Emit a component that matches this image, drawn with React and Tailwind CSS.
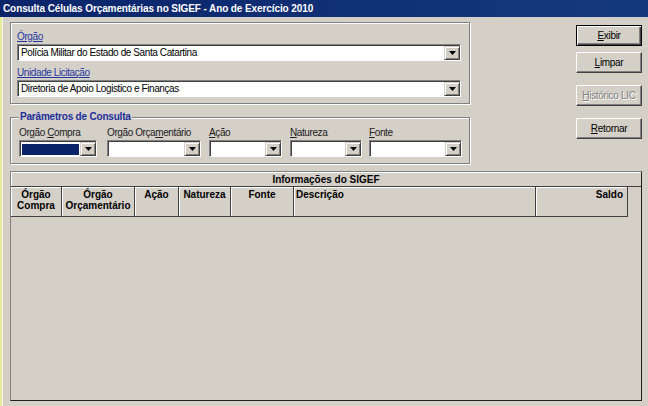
import React from 'react';

const Arrow = () => (
    <div className="w-[16px] h-full bg-[#d4d0c8] border border-t-[#d4d0c8] border-l-[#d4d0c8] border-r-[#404040] border-b-[#404040] shadow-[inset_1px_1px_0_#fff,inset_-1px_-1px_0_#808080] flex items-center justify-center">
        <svg width="7" height="4" viewBox="0 0 7 4">
            <path d="M0 0h7L3.5 4z" fill="#000" />
        </svg>
    </div>
);

const Combo = ({ value, width, selected }) => (
    <div
        className={`h-[17px] flex border border-t-[#808080] border-l-[#808080] border-r-white border-b-white shadow-[inset_1px_1px_0_#404040] bg-white pl-[1px] pt-[1px] ${width}`}
    >
        <div className="flex-1 min-w-0 flex items-center">
            {selected ? (
                <div className="h-[11px] w-full mx-[1px] bg-[#0a246a]" />
            ) : (
                <span className="pl-[2px] text-[10px] tracking-[-0.4px] text-black whitespace-nowrap leading-none">{value}</span>
            )}
        </div>
        <Arrow />
    </div>
);

const Btn = ({ children, isDefault, disabled }) => (
    <button
        className={`w-[66px] h-[21px] bg-[#d4d0c8] flex items-center justify-center text-[10px] tracking-[-0.3px] ${
            isDefault
                ? 'border border-black shadow-[inset_1px_1px_0_#fff,inset_-1px_-1px_0_#404040,inset_-2px_-2px_0_#808080]'
                : 'border border-t-white border-l-white border-r-[#404040] border-b-[#404040] shadow-[inset_-1px_-1px_0_#808080]'
        } ${disabled ? 'text-[#808080] [text-shadow:1px_1px_0_#fff]' : 'text-black'}`}
    >
        {children}
    </button>
);

const ParamField = ({ label, width, ml, selected }) => (
    <div className={`flex flex-col ${ml}`}>
        <div className="h-[13px] text-[10px] tracking-[-0.4px] text-[#202020] leading-[11px] whitespace-nowrap">{label}</div>
        <Combo width={width} selected={selected} />
    </div>
);

const cols = [
    { w: 'w-[51px]', label: ['Órgão', 'Compra'], align: 'text-center' },
    { w: 'w-[73px]', label: ['Órgão', 'Orçamentário'], align: 'text-center' },
    { w: 'w-[44px]', label: ['Ação'], align: 'text-center' },
    { w: 'w-[52px]', label: ['Natureza'], align: 'text-center' },
    { w: 'w-[63px]', label: ['Fonte'], align: 'text-center' },
    { w: 'w-[242px]', label: ['Descrição'], align: 'text-left pl-[2px]' },
    { w: 'w-[92px]', label: ['Saldo'], align: 'text-right pr-[4px]' },
];

const App = () => {
    return (
        <div className="w-[648px] h-[406px] bg-[#d4d0c8] flex flex-col overflow-hidden font-['Liberation_Sans',Arial,sans-serif] text-black">
            {/* Title bar */}
            <div className="h-[17px] shrink-0 bg-linear-to-r from-[#0a246a] to-[#15397f] flex items-center pl-[3px]">
                <span className="text-white font-bold text-[10px] tracking-[-0.1px] whitespace-nowrap">
                    Consulta Células Orçamentárias no SIGEF - Ano de Exercício 2010
                </span>
            </div>

            <div className="flex-1 flex min-h-0">
                <div className="w-[2px] bg-[#e6eb9c] shadow-[1px_0_0_#f4f4ea]" />
                <div className="flex-1 flex flex-col pl-[8px] pr-[6px] pt-[5px] pb-[5px] min-h-0">
                    {/* Top section */}
                    <div className="flex">
                        <div className="w-[460px] flex flex-col">
                            {/* Group 1 */}
                            <div className="border border-[#808080] shadow-[inset_1px_1px_0_#fff,1px_1px_0_#fff] pl-[6px] pt-[8px] pb-[6px]">
                                <div className="h-[13px] text-[10px] tracking-[-0.4px] text-[#2436a0] underline leading-[11px]">Órgão</div>
                                <Combo width="w-[444px]" value="Polícia Militar do Estado de Santa Catartina" />
                                <div className="h-[13px] mt-[6px] text-[10px] tracking-[-0.4px] text-[#2436a0] underline leading-[11px]">Unidade Licitação</div>
                                <Combo width="w-[444px]" value="Diretoria de Apoio Logistico e Finanças" />
                            </div>

                            {/* Group 2 */}
                            <fieldset className="mt-[8px] border border-[#808080] shadow-[inset_1px_1px_0_#fff,1px_1px_0_#fff] pl-[8px] pt-[5px] pb-[6px]">
                                <legend className="px-[1px] bg-[#d4d0c8] text-[10px] leading-[10px] font-bold text-[#1c2d9a] tracking-[-0.2px]">
                                    Parâmetros de Consulta
                                </legend>
                                <div className="flex">
                                    <ParamField label={<>Orgão <u>C</u>ompra</>} width="w-[78px]" ml="" selected />
                                    <ParamField label={<>Orgão Orça<u>m</u>entário</>} width="w-[94px]" ml="ml-[10px]" />
                                    <ParamField label={<><u>A</u>ção</>} width="w-[73px]" ml="ml-[8px]" />
                                    <ParamField label={<><u>N</u>atureza</>} width="w-[72px]" ml="ml-[8px]" />
                                    <ParamField label={<><u>F</u>onte</>} width="w-[93px]" ml="ml-[7px]" />
                                </div>
                            </fieldset>
                        </div>

                        {/* Buttons */}
                        <div className="ml-auto flex flex-col pt-[3px]">
                            <Btn isDefault><span><u>E</u>xibir</span></Btn>
                            <div className="mt-[6px]"><Btn><span><u>L</u>impar</span></Btn></div>
                            <div className="mt-[12px]"><Btn disabled><span><u>H</u>istórico LIC</span></Btn></div>
                            <div className="mt-[12px]"><Btn><span><u>R</u>etornar</span></Btn></div>
                        </div>
                    </div>

                    {/* Table */}
                    <div className="mt-[7px] flex-1 flex flex-col border border-t-[#808080] border-l-[#808080] border-r-[#202020] border-b-[#202020] min-h-0">
                        <div className="h-[15px] shrink-0 border-b border-[#404040] shadow-[inset_1px_1px_0_#fff] flex items-center justify-center text-[10px] font-bold">
                            Informações do SIGEF
                        </div>
                        <div className="flex">
                            {cols.map((c, i) => (
                                <div
                                    key={i}
                                    className={`${c.w} h-[30px] border-r border-b border-[#404040] shadow-[inset_1px_1px_0_#fff] pt-[2px] text-[10px] font-bold leading-[11px] ${c.align}`}
                                >
                                    {c.label.map((l, j) => (
                                        <div key={j}>{l}</div>
                                    ))}
                                </div>
                            ))}
                        </div>
                        <div className="flex-1" />
                    </div>
                </div>
            </div>
        </div>
    );
};

export default App;
